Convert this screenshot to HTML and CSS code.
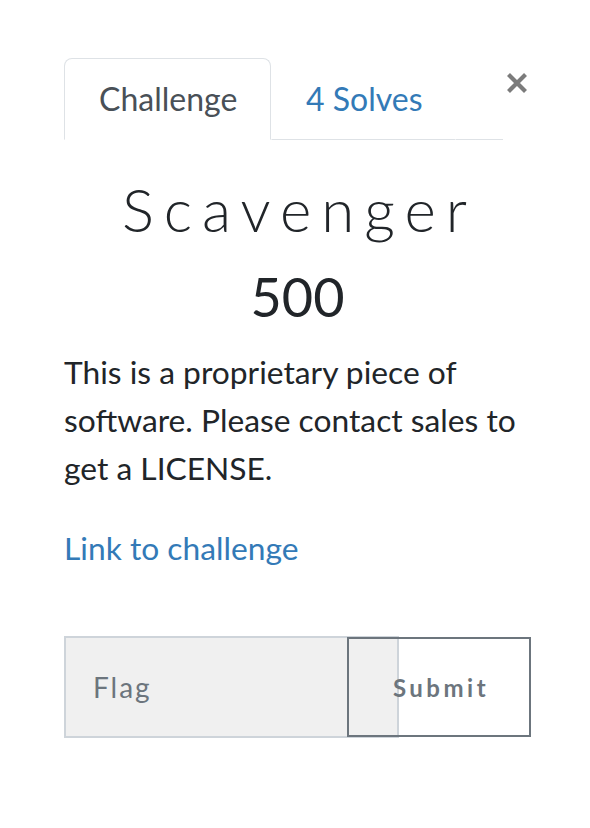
FILE: index.html
```html
<!DOCTYPE html>
<html>
<head>
<meta charset="utf-8">
<link rel="stylesheet" href="styles.css">
</head>
<body>
<div class="modal">
  <div class="header">
    <ul class="tabs">
      <li class="tab active">Challenge</li>
      <li class="tab link">4 Solves</li>
      <li class="tab-rest"></li>
    </ul>
    <button class="close" aria-label="Close">
      <svg width="22" height="22" viewBox="0 0 22 22"><path d="M2.5 2.5 L19.5 19.5 M19.5 2.5 L2.5 19.5" stroke="#7b7b7b" stroke-width="4.2" stroke-linecap="butt"/></svg>
    </button>
  </div>
  <h3 class="name">Scavenger</h3>
  <h4 class="value">500</h4>
  <p class="desc">This is a proprietary piece of software. Please contact sales to get a LICENSE.</p>
  <p class="desc"><a class="chal-link" href="#">Link to challenge</a></p>
  <div class="input-group">
    <input class="flag" type="text" placeholder="Flag">
    <button class="submit">Submit</button>
  </div>
</div>
</body>
</html>
```
FILE: styles.css
```css
html, body {
  margin: 0;
  padding: 0;
  background: #ffffff;
}
body {
  font-family: "Lato", "Liberation Sans", sans-serif;
  color: #212529;
}
.modal {
  margin-left: 64px;
  width: 467px;
  padding-top: 58px;
}
.header {
  display: flex;
  align-items: flex-start;
}
.tabs {
  list-style: none;
  margin: 0;
  padding: 0;
  display: flex;
  width: 439px;
}
.tab {
  font-size: 32px;
  line-height: 48px;
  padding: 16px 32px;
  border: 1px solid transparent;
  border-bottom: 1px solid #dee2e6;
  border-radius: 8px 8px 0 0;
}
.tab.active {
  color: #495057;
  border-color: #dee2e6 #dee2e6 transparent #dee2e6;
  width: 139px;
  padding-left: 34px;
}
.tab.link {
  color: #337ab7;
  padding-left: 34px;
}
.tab-rest {
  flex: 1;
  border-bottom: 1px solid #dee2e6;
}
.close {
  margin-top: 14px;
  margin-left: 3px;
  width: 22px;
  height: 22px;
  padding: 0;
  border: 0;
  background: none;
  display: block;
}
.close svg {
  display: block;
}
.name {
  margin: 33px 0 0 0;
  font-weight: 300;
  font-size: 60px;
  line-height: 72px;
  letter-spacing: 10px;
  text-align: center;
  padding-left: 4px;
}
.value {
  margin: 19px 0 0 0;
  font-weight: 400;
  font-size: 54px;
  line-height: 65px;
  text-align: center;
}
.desc {
  margin: 19px 0 0 0;
  font-size: 31.75px;
  line-height: 48px;
}
.desc + .desc {
  margin-top: 32px;
}
.chal-link {
  color: #337ab7;
  text-decoration: none;
}
.input-group {
  display: flex;
  margin-top: 64px;
}
.flag {
  box-sizing: border-box;
  width: 335px;
  height: 102px;
  border: 2px solid #ced4da;
  background: #f0f0f0;
  padding: 0 0 0 27px;
  font-family: "Lato", sans-serif;
  font-weight: 400;
  font-size: 28px;
  letter-spacing: 2px;
  color: #495057;
  outline: none;
}
.flag::placeholder {
  color: #6c757d;
}
.submit {
  box-sizing: border-box;
  width: 184px;
  height: 100px;
  margin-top: 1px;
  margin-left: -52px;
  border: 2px solid #6c757d;
  background: transparent;
  font-family: "Lato", sans-serif;
  font-weight: 700;
  font-size: 24px;
  letter-spacing: 3.5px;
  color: #6c757d;
  padding: 0 0 0 4px;
}
```
